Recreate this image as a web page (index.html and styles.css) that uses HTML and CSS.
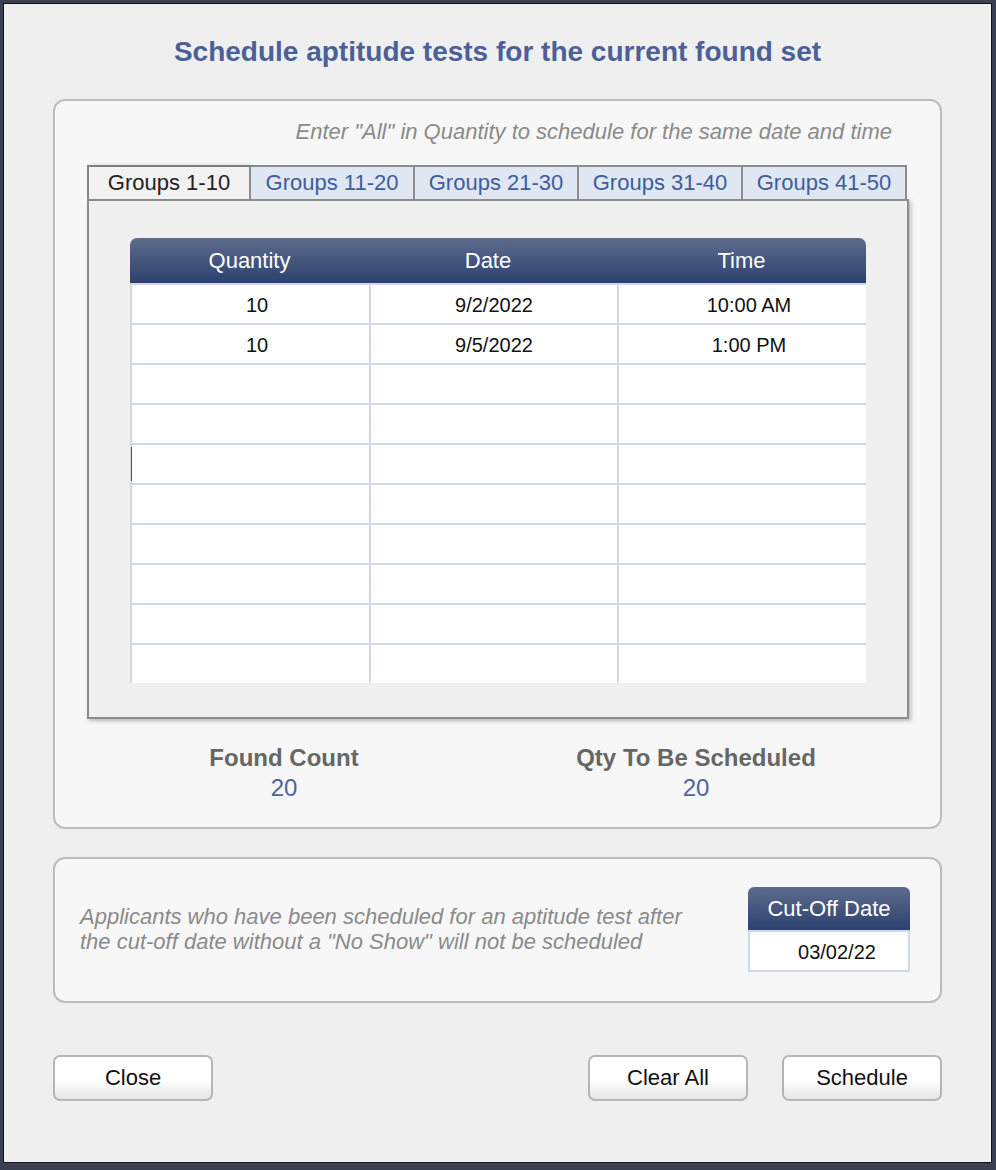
FILE: index.html
```html
<!DOCTYPE html>
<html lang="en">
<head>
    <meta charset="UTF-8">
    <title>Schedule aptitude tests</title>
    <link rel="stylesheet" href="styles.css">
</head>
<body>
    <div class="dialog">
        <h1 class="dialog-title">Schedule aptitude tests for the current found set</h1>

        <!-- Groups panel -->
        <div class="panel panel-groups">
            <p class="hint">Enter "All" in Quantity to schedule for the same date and time</p>

            <div class="tabs">
                <div class="tab active">Groups 1-10</div>
                <div class="tab">Groups 11-20</div>
                <div class="tab">Groups 21-30</div>
                <div class="tab">Groups 31-40</div>
                <div class="tab">Groups 41-50</div>
            </div>
            <div class="tab-panel">
                <div class="grid">
                    <div class="grid-head">
                        <div>Quantity</div>
                        <div>Date</div>
                        <div>Time</div>
                    </div>
                    <div class="grid-row"><div>10</div><div>9/2/2022</div><div>10:00 AM</div></div>
                    <div class="grid-row"><div>10</div><div>9/5/2022</div><div>1:00 PM</div></div>
                    <div class="grid-row"><div></div><div></div><div></div></div>
                    <div class="grid-row"><div></div><div></div><div></div></div>
                    <div class="grid-row"><div><span class="caret"></span></div><div></div><div></div></div>
                    <div class="grid-row"><div></div><div></div><div></div></div>
                    <div class="grid-row"><div></div><div></div><div></div></div>
                    <div class="grid-row"><div></div><div></div><div></div></div>
                    <div class="grid-row"><div></div><div></div><div></div></div>
                    <div class="grid-row"><div></div><div></div><div></div></div>
                </div>
            </div>

            <div class="counts">
                <div class="count">
                    <div class="count-label">Found Count</div>
                    <div class="count-value">20</div>
                </div>
                <div class="count">
                    <div class="count-label">Qty To Be Scheduled</div>
                    <div class="count-value">20</div>
                </div>
            </div>
        </div>

        <!-- Cut-off panel -->
        <div class="panel panel-cutoff">
            <p class="note">Applicants who have been scheduled for an aptitude test after<br>the cut-off date without a "No Show" will not be scheduled</p>
            <div class="cutoff">
                <div class="cutoff-head">Cut-Off Date</div>
                <div class="cutoff-value">03/02/22</div>
            </div>
        </div>

        <div class="buttons">
            <button class="btn">Close</button>
            <span class="spacer"></span>
            <button class="btn">Clear All</button>
            <button class="btn">Schedule</button>
        </div>
    </div>
</body>
</html>
```

FILE: styles.css
```css
body {
    margin: 0;
    padding: 3px 0 0 3px;
    font-family: "Liberation Sans", Arial, sans-serif;
    background: #3b4150;
    overflow: hidden;
}

.dialog {
    box-sizing: border-box;
    width: 989px;
    height: 1160px;
    border: 1px solid #141414;
    background: #efefef;
    padding: 33px 49px 0 49px;
}

.dialog-title {
    margin: 0;
    font-size: 28px;
    line-height: 30px;
    font-weight: bold;
    color: #4b5f99;
    text-align: center;
}

.panel {
    border: 2px solid #bcbcbc;
    border-radius: 12px;
    background: #f7f7f7;
}

/* groups panel */
.panel-groups {
    margin-top: 32px;
    padding: 20px 0 26px 32px;
}

.hint {
    margin: 0 48px 22px 0;
    text-align: right;
    font-style: italic;
    font-size: 22px;
    line-height: 22px;
    color: #8a8a8a;
}

.tabs {
    display: flex;
    width: 820px;
    border-top: 2px solid #8c8c8c;
    border-left: 2px solid #8c8c8c;
    box-sizing: border-box;
}

.tab {
    box-sizing: border-box;
    width: 164px;
    height: 32px;
    border-right: 2px solid #8c8c8c;
    background: #dfe7f3;
    color: #3f5c9c;
    font-size: 22px;
    line-height: 32px;
    text-align: center;
}

.tab:first-child {
    width: 162px;
}

.tab.active {
    background: #f2f2f2;
    color: #222;
    box-shadow: 0 -2px 4px rgba(0,0,0,0.15);
}

.tab-panel {
    box-sizing: border-box;
    width: 822px;
    height: 520px;
    border: 2px solid #8c8c8c;
    background: #f0f0f0;
    padding: 37px 0 0 41px;
    box-shadow: 2px 2px 4px rgba(0,0,0,0.25);
}

.grid {
    width: 736px;
}

.grid-head,
.grid-row {
    display: grid;
    grid-template-columns: 239px 248px 249px;
}

.grid-head {
    height: 45px;
    border-radius: 7px 7px 0 0;
    background: linear-gradient(#5e6b8d, #2c416f);
    color: #fff;
    font-size: 22px;
    line-height: 45px;
    text-align: center;
}

.grid-head div:nth-child(2) {
    padding-right: 10px;
}

.grid-row {
    height: 40px;
    background: #fff;
}

.grid-row div {
    position: relative;
    box-sizing: border-box;
    border-left: 2px solid #d0d8e6;
    border-top: 2px solid #d0d8e6;
    font-size: 20px;
    line-height: 41px;
    text-align: center;
    color: #111;
}

.grid-row div:nth-child(1),
.grid-row div:nth-child(3) {
    padding-left: 13px;
}

.caret {
    position: absolute;
    left: -1px;
    top: 2px;
    height: 34px;
    border-left: 1px solid #555;
}

/* counts */
.counts {
    display: flex;
    gap: 112px;
    margin: 26px 0 0 47px;
}

.count {
    width: 300px;
    text-align: center;
}

.count-label {
    font-size: 24px;
    line-height: 26px;
    font-weight: bold;
    color: #666;
}

.count-value {
    margin-top: 4px;
    font-size: 24px;
    line-height: 26px;
    color: #4a64a0;
}

/* cut-off panel */
.panel-cutoff {
    margin-top: 28px;
    height: 146px;
    box-sizing: border-box;
    display: flex;
    align-items: center;
    justify-content: space-between;
    padding: 0 30px 2px 25px;
}

.note {
    margin: 0;
    font-style: italic;
    font-size: 22px;
    line-height: 25px;
    color: #8a8a8a;
}

.cutoff {
    width: 162px;
}

.cutoff-head {
    height: 43px;
    border-radius: 6px 6px 0 0;
    background: linear-gradient(#5e6b8d, #2c416f);
    color: #fff;
    font-size: 22px;
    line-height: 43px;
    text-align: center;
}

.cutoff-value {
    box-sizing: border-box;
    height: 42px;
    border: 2px solid #d0d8e6;
    padding-left: 16px;
    background: #fff;
    font-size: 20px;
    line-height: 40px;
    text-align: center;
    color: #111;
}

/* footer buttons */
.buttons {
    display: flex;
    gap: 34px;
    margin-top: 52px;
}

.spacer {
    flex: 1;
}

.btn {
    width: 160px;
    height: 46px;
    border: 2px solid #b4b6bc;
    border-radius: 7px;
    background: linear-gradient(#ffffff 55%, #e6e6e6);
    font-family: "Liberation Sans", Arial, sans-serif;
    font-size: 22px;
    color: #111;
    padding: 0;
}
```
